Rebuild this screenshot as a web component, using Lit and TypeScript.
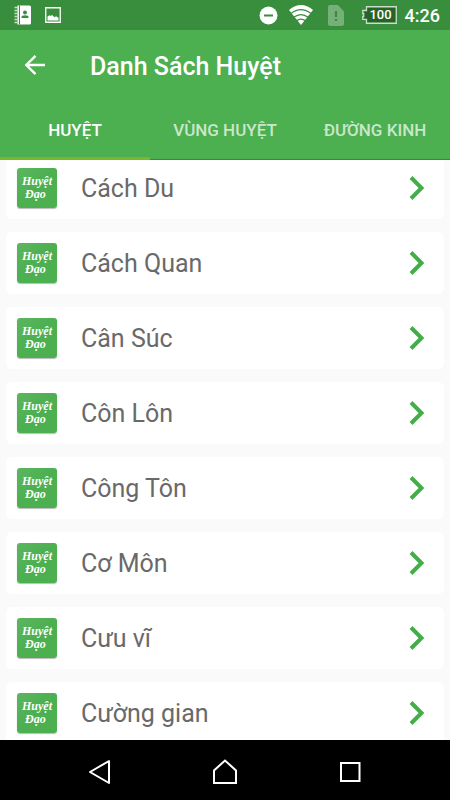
import { LitElement, html, css } from "lit";
import { customElement, property, state, query } from "lit/decorators.js";
import { classMap } from "lit/directives/class-map.js";

@customElement("status-bar")
class StatusBar extends LitElement {
  static styles = css`
    :host {
      display: flex;
      align-items: center;
      height: 30px;
      padding: 0 10px 0 14px;
      background: #388e3c;
      color: #fff;
      box-sizing: border-box;
      flex: none;
    }
    svg { display: block; flex: none; }
    .group { display: flex; align-items: center; gap: 13px; }
    .right { margin-left: auto; gap: 11px; }
    .sim { margin-left: 4px; }
    .battery { display: grid; align-items: center; justify-items: center; margin-left: 7px; }
    .battery > * { grid-area: 1 / 1; }
    .level { font-size: 13px; line-height: 16px; font-weight: 500; padding-left: 3px; }
    .time { font-size: 18px; line-height: 22px; font-weight: 500; margin-left: -3px; padding-top: 2px; }
  `;
  render() {
    return html`
      <div class="group">
        <svg width="18" height="20" viewBox="0 0 18 20" aria-hidden="true">
          <path d="M3.500 .5h12q1.500 0 1.500 1.500v16q0 1.500-1.500 1.500h-12z" fill="#fff" />
          <path d="M5.500 .5v19" stroke="#388e3c" stroke-width="1" />
          <path d="M.5 2.500h4M.5 5.500h4M.5 8.500h4M.5 11.500h4M.5 14.500h4M.5 17.500h4" stroke="#c5dec6" stroke-width="1.500" />
          <circle cx="11" cy="7.500" r="2" fill="#388e3c" />
          <path d="M7.500 13v-1q0-1.700 3.500-1.700t3.500 1.700v1z" fill="#388e3c" />
        </svg>
        <svg width="16" height="16" viewBox="0 0 16 16" aria-hidden="true">
          <path d="M.75.75h14.500v14.500H.75z" fill="none" stroke="#fff" stroke-width="1.300" />
          <path d="M2.500 13.500V9.500l2-1.300 1 .8 1.500-1 2.500 2.300 1.500-1 2.500 1.500v2.700z" fill="#fff" />
        </svg>
      </div>
      <div class="group right">
        <svg width="19" height="19" viewBox="0 0 19 19" aria-hidden="true">
          <circle cx="9.500" cy="9.500" r="9" fill="#fff" />
          <path d="M5 9.500h9" stroke="#388e3c" stroke-width="2" />
        </svg>
        <svg width="24" height="20" viewBox="0 0 24 20" aria-hidden="true">
          <path d="M0 5Q12-5 24 5L12 20z" fill="#fff" />
          <path d="M2 8.600Q12 .8 22 8.600M4.800 12.300Q12 6.800 19.200 12.300M7.500 15.800Q12 12.400 16.500 15.800" fill="none" stroke="#388e3c" stroke-width="1.300" />
        </svg>
        <svg class="sim" width="16" height="21" viewBox="0 0 16 21" aria-hidden="true">
          <path d="M2 0h8l6 6.500V19q0 2-2 2H2q-2 0-2-2V2q0-2 2-2z" fill="#74b077" />
          <path d="M8 6v6M8 14v2" stroke="#388e3c" stroke-width="2.200" />
        </svg>
        <div class="battery">
          <svg width="35" height="18" viewBox="0 0 35 18" aria-hidden="true">
            <path d="M4.500.75h29.750v16.500H4.500v-3.800H.75V10.500h1v-3h-1v-3H4.500z" fill="#276329" stroke="#c8dfc9" stroke-width="1.300" />
          </svg>
          <span class="level">100</span>
        </div>
        <span class="time">4:26</span>
      </div>
    `;
  }
}

@customElement("point-row")
class PointRow extends LitElement {
  @property() name = "";
  static styles = css`
    :host { display: block; }
    .card {
      display: flex;
      align-items: center;
      width: 100%;
      height: 62px;
      padding: 0 19px 0 11px;
      border: 0;
      border-radius: 6px;
      background: #fff;
      box-sizing: border-box;
      font: inherit;
      color: #696969;
      text-align: left;
      cursor: pointer;
    }
    .logo {
      display: flex;
      flex-direction: column;
      justify-content: center;
      flex: none;
      width: 40px;
      height: 40px;
      border-radius: 3px;
      background: linear-gradient(135deg, #5cb660, #4caf50 50%);
      box-shadow: 0 1px 1px #bbb;
      color: #fff;
      font: italic bold 12px/13px "Brush Script MT", "Liberation Serif", serif;
      box-sizing: border-box;
      padding-left: 5px;
    }
    .second { padding-left: 3px; }
    .name { flex: 1; margin-left: 24px; padding-top: 2px; font-size: 25px; line-height: 32px; }
    svg { display: block; flex: none; }
  `;
  render() {
    return html`
      <button class="card">
        <span class="logo" aria-hidden="true"><span>Huyệt</span><span class="second">Đạo</span></span>
        <span class="name">${this.name}</span>
        <svg width="16" height="26" viewBox="0 0 16 26" aria-hidden="true">
          <path d="M2 2.500L12.500 13L2 23.500" fill="none" stroke="#43ae48" stroke-width="4" />
        </svg>
      </button>
    `;
  }
}

@customElement("nav-bar")
class NavBar extends LitElement {
  static styles = css`
    :host {
      display: flex;
      justify-content: center;
      gap: 85px;
      flex: none;
      height: 60px;
      background: #000;
    }
    button {
      display: grid;
      place-items: center;
      width: 40px;
      border: 0;
      padding: 4px 0 0;
      background: none;
      cursor: pointer;
    }
    svg { display: block; fill: none; stroke: #fff; stroke-width: 2; }
  `;
  render() {
    return html`
      <button aria-label="Back">
        <svg width="26" height="26" viewBox="0 0 26 26"><path d="M22 2v22L3 13z" stroke-linejoin="round" /></svg>
      </button>
      <button aria-label="Home">
        <svg width="26" height="26" viewBox="0 0 26 26"><path d="M2 24V11.500L13 1.500L24 11.500V24z" /></svg>
      </button>
      <button aria-label="Recent">
        <svg width="26" height="26" viewBox="0 0 26 26"><path d="M4 4h18.500v18H4z" /></svg>
      </button>
    `;
  }
}

@customElement("app-root")
class AppRoot extends LitElement {
  @state() private active = 0;
  @query(".list") private list!: HTMLElement;

  private tabs = ["HUYỆT", "VÙNG HUYỆT", "ĐƯỜNG KINH"];
  private points = ["Cách Du", "Cách Quan", "Cân Súc", "Côn Lôn", "Công Tôn", "Cơ Môn", "Cưu vĩ", "Cường gian"];

  static styles = css`
    :host {
      display: flex;
      flex-direction: column;
      height: 100vh;
      background: #fafafa;
      font-family: Roboto, sans-serif;
    }
    .bar {
      display: flex;
      align-items: center;
      flex: none;
      height: 70px;
      padding-left: 20px;
      background: #4caf50;
      color: #fff;
    }
    .back {
      display: grid;
      place-items: center;
      width: 30px;
      height: 40px;
      padding: 0;
      border: 0;
      background: none;
      cursor: pointer;
    }
    .title { margin: 0 0 0 40px; padding-top: 3px; font-size: 25px; line-height: 32px; font-weight: 500; }
    .tabs { display: flex; flex: none; height: 60px; background: #4caf50; }
    .tab {
      flex: 1 1 0;
      padding: 1px 0 0;
      border: 0;
      border-bottom: 1px solid #1f9a25;
      background: none;
      color: #c9e7ca;
      font: 500 17px/24px Roboto, sans-serif;
      white-space: nowrap;
      cursor: pointer;
    }
    .tab.active { border-bottom: 3px solid #7cb62f; padding-top: 3px; color: #fff; }
    .list {
      display: flex;
      flex-direction: column;
      gap: 13px;
      flex: 1;
      min-height: 0;
      overflow-y: auto;
      scrollbar-width: none;
      padding: 10px 6px 13px;
    }
  `;

  firstUpdated() {
    requestAnimationFrame(() => this.list.scrollTo(0, 13));
  }

  render() {
    return html`
      <status-bar></status-bar>
      <header class="bar">
        <button class="back" aria-label="Back">
          <svg width="22" height="22" viewBox="0 0 22 22" fill="none" stroke="#fff" stroke-width="2.400">
            <path d="M21 11H3M11.500 1.800L2.300 11L11.500 20.200" />
          </svg>
        </button>
        <h1 class="title">Danh Sách Huyệt</h1>
      </header>
      <nav class="tabs" role="tablist">
        ${this.tabs.map(
          (label, i) => html`<button
            role="tab"
            aria-selected=${i === this.active}
            class=${classMap({ tab: true, active: i === this.active })}
            @click=${() => (this.active = i)}
          >${label}</button>`
        )}
      </nav>
      <main class="list">
        ${this.points.map((p) => html`<point-row .name=${p}></point-row>`)}
      </main>
      <nav-bar></nav-bar>
    `;
  }
}
